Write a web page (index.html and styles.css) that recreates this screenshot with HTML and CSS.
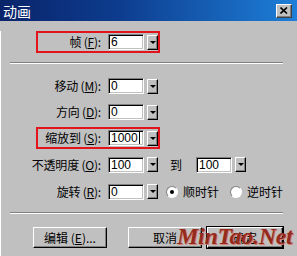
FILE: index.html
```html
<!DOCTYPE html>
<html lang="zh">
<head>
    <meta charset="UTF-8">
    <title>动画</title>
    <link rel="stylesheet" href="styles.css">
</head>
<body>

<div class="dialog">

    <!-- Titelleiste -->
    <div class="titlebar">
        <span class="title">动画</span>
        <span class="close">
            <svg width="8" height="7" viewBox="0 0 8 7"><path d="M0.5 0.5 L7 6.5 M7 0.5 L0.5 6.5" stroke="#000" stroke-width="1.6"/></svg>
        </span>
    </div>

    <div class="content">

        <div class="row mark first">
            <span class="lbl"><span>帧 (<u>F</u>):</span></span>
            <span class="field">6</span>
            <span class="drop"></span>
        </div>

        <div class="sep"></div>

        <div class="row move">
            <span class="lbl"><span>移动 (<u>M</u>):</span></span>
            <span class="field">0</span>
            <span class="drop"></span>
        </div>

        <div class="row">
            <span class="lbl"><span>方向 (<u>D</u>):</span></span>
            <span class="field">0</span>
            <span class="drop"></span>
        </div>

        <div class="row mark">
            <span class="lbl"><span>缩放到 (<u>S</u>):</span></span>
            <span class="field">1000<i class="caret"></i></span>
            <span class="drop"></span>
        </div>

        <div class="row">
            <span class="lbl"><span>不透明度 (<u>O</u>):</span></span>
            <span class="field">100</span>
            <span class="drop"></span>
            <span class="to">到</span>
            <span class="field">100</span>
            <span class="drop"></span>
        </div>

        <div class="row">
            <span class="lbl"><span>旋转 (<u>R</u>):</span></span>
            <span class="field">0</span>
            <span class="drop"></span>
            <span class="radio checked"></span>
            <span class="rlabel">顺时针</span>
            <span class="radio"></span>
            <span class="rlabel">逆时针</span>
        </div>

        <div class="sep sep-bottom"></div>

        <!-- Schaltflächen -->
        <div class="buttons">
            <span class="btn edit">编辑 (<u>E</u>)...</span>
            <span class="btn cancel">取消</span>
            <span class="btn ok">确定</span>
        </div>

    </div>

    <div class="watermark">MinTao.Net</div>
</div>

</body>
</html>
```

FILE: styles.css
```css
/* Grundlegende Stile */
body {
    margin: 0;
    padding: 0;
    background-color: #c0c0c0;
    font-family: 'Noto Sans CJK SC', 'Liberation Sans', sans-serif;
    font-size: 12px;
    color: #000;
}

.dialog {
    position: relative;
    width: 297px;
    height: 256px;
    background-color: #c0c0c0;
    overflow: hidden;
}

.titlebar {
    height: 21px;
    display: flex;
    align-items: center;
    justify-content: space-between;
    padding: 0 5px 0 3px;
    background: linear-gradient(to right, #0a246a 0%, #0d3c8e 40%, #1e7fd8 100%);
    color: #fff;
}

.title {
    font-size: 14px;
    line-height: 16px;
}

.close {
    width: 14px;
    height: 12px;
    display: flex;
    align-items: center;
    justify-content: center;
    background-color: #c0c0c0;
    border: 1px solid;
    border-color: #fff #404040 #404040 #fff;
    box-shadow: inset -1px -1px #808080;
}

.content {
    border-left: 1px solid #fff;
    height: 235px;
}

.row {
    display: flex;
    align-items: center;
    width: fit-content;
    margin-left: 35px;
    padding: 1px 0;
    border: 2px solid transparent;
    margin-top: 4px;
}

.row.mark {
    border-color: #e4141c;
}

.row.first {
    margin-top: 10px;
}

.row.move {
    margin-top: 11px;
}

/* Beschriftung rechtsbündig, Überlauf nach links */
.lbl {
    display: flex;
    justify-content: flex-end;
    width: 63px;
    margin-right: 7px;
    white-space: nowrap;
    line-height: 16px;
    letter-spacing: -0.2px;
}

.field {
    width: 30px;
    height: 12px;
    padding: 1px 2px;
    background-color: #fff;
    border: 1px solid;
    border-color: #808080 #fff #fff #808080;
    box-shadow: inset 1px 1px #000, inset -1px -1px #c0c0c0;
    font-family: 'Liberation Sans', sans-serif;
    font-size: 12px;
    line-height: 13px;
}

.caret {
    display: inline-block;
    width: 1px;
    height: 12px;
    margin-left: 1px;
    vertical-align: -2px;
    background-color: #000;
}

.drop {
    position: relative;
    width: 9px;
    height: 13px;
    margin-left: 3px;
    background-color: #c0c0c0;
    border: 1px solid;
    border-color: #fff #000 #000 #fff;
    box-shadow: inset -1px -1px #808080;
}

.drop::after {
    content: "";
    position: absolute;
    left: 2px;
    top: 5px;
    border-left: 3px solid transparent;
    border-right: 3px solid transparent;
    border-top: 3px solid #000;
}

.to {
    margin: 0 14px 0 12px;
}

.radio {
    width: 10px;
    height: 10px;
    border-radius: 50%;
    background-color: #fff;
    border: 1px solid;
    border-color: #808080 #fff #fff #808080;
    margin-left: 8px;
    margin-right: 5px;
    display: flex;
    align-items: center;
    justify-content: center;
}

.radio.checked::after {
    content: "";
    width: 4px;
    height: 4px;
    border-radius: 50%;
    background-color: #000;
}

.radio + .rlabel + .radio {
    margin-left: 11px;
}

.sep {
    margin: 9px 14px 0 9px;
    border-top: 1px solid #808080;
    border-bottom: 1px solid #fff;
}

.sep-bottom {
    margin-top: 9px;
}

.buttons {
    display: flex;
    margin-top: 13px;
    padding-left: 32px;
}

.btn {
    width: 72px;
    height: 19px;
    display: flex;
    align-items: center;
    justify-content: center;
    border: 1px solid;
    border-color: #fff #000 #000 #fff;
    box-shadow: inset -1px -1px #808080;
    line-height: 16px;
}

.btn.cancel {
    margin-left: 21px;
}

.btn.ok {
    margin-left: 5px;
    outline: 1px solid #000;
    width: 74px;
}

/* Wasserzeichen */
.watermark {
    position: absolute;
    left: 177px;
    top: 223px;
    font-family: 'Liberation Serif', serif;
    font-style: italic;
    font-weight: bold;
    font-size: 24px;
    color: #962a1c;
    text-shadow: 1px 1px 0 #d08070;
    letter-spacing: -0.3px;
}
```
